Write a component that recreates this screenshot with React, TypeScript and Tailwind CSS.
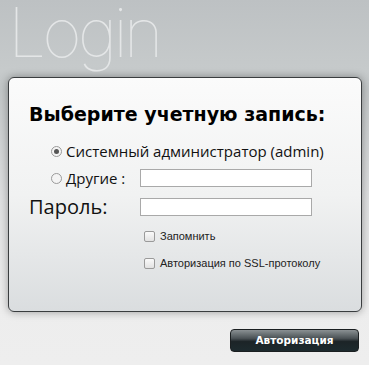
export default function App() {
  return (
    <div className="relative h-[365px] w-[369px] overflow-hidden bg-[linear-gradient(to_bottom,#bdc1c3_0px,#c6cacb_70px,#c2c6c7_90px,#dfe0e1_200px,#ededed_300px,#eeeeee_365px)] font-['Liberation_Sans',sans-serif]">
      {/* Header */}
      <div className="h-[77px] pl-[8px]">
        <h1 className="font-['Inter',sans-serif] text-[68px] font-thin leading-[64px] tracking-[-4px] text-[#e4e6e7]">
          Login
        </h1>
      </div>

      {/* Panel */}
      <div className="mx-[8px] h-[235px] w-[354px] rounded-[6px] border border-[#3a3d3f] bg-[linear-gradient(to_bottom,#fbfbfb,#f1f2f2_50%,#dadddf)] shadow-[0_0_8px_rgba(0,0,0,0.35)]">
        <h2 className="pl-[20px] pt-[24px] font-['DejaVu_Sans',sans-serif] text-[19px] font-bold leading-[24px] text-black">
          Выберите учетную запись:
        </h2>

        <div className="mt-[15px] flex items-center pl-[42px] font-['Open_Sans',sans-serif] text-[15px] leading-[20px] text-[#111]">
          <span className="mr-[4px] flex h-[11px] w-[11px] items-center justify-center rounded-full border border-[#9a9a9a] bg-[#f4f4f4]">
            <span className="h-[5px] w-[5px] rounded-full bg-[#555]" />
          </span>
          Системный администратор (admin)
        </div>

        <div className="mt-[7px] flex items-center font-['Open_Sans',sans-serif] text-[15px] leading-[20px] text-[#111]">
          <div className="flex w-[131px] items-center pl-[42px]">
            <span className="mr-[4px] h-[11px] w-[11px] rounded-full border border-[#9a9a9a] bg-[#f4f4f4]" />
            Другие :
          </div>
          <div className="h-[18px] w-[172px] border border-[#a9a9a9] bg-white" />
        </div>

        <div className="mt-[7px] flex items-center text-[#111]">
          <div className="w-[131px] pl-[20px] font-['Open_Sans',sans-serif] text-[20px] leading-[24px]">
            Пароль:
          </div>
          <div className="h-[18px] w-[172px] border border-[#a9a9a9] bg-white" />
        </div>

        <div className="mt-[11px] flex flex-col gap-[15px] pl-[135px] font-['Liberation_Sans',sans-serif] text-[11px] leading-[12px] text-[#222]">
          <div className="flex items-center">
            <span className="mr-[5px] h-[11px] w-[11px] rounded-[2px] border border-[#9a9a9a] bg-[linear-gradient(to_bottom,#fafafa,#e2e2e2)]" />
            Запомнить
          </div>
          <div className="flex items-center">
            <span className="mr-[5px] h-[11px] w-[11px] rounded-[2px] border border-[#9a9a9a] bg-[linear-gradient(to_bottom,#fafafa,#e2e2e2)]" />
            Авторизация по SSL-протоколу
          </div>
        </div>
      </div>

      {/* Button */}
      <div className="mt-[17px] flex justify-end pr-[10px]">
        <button className="h-[23px] w-[129px] rounded-[4px] border border-[#1b1f21] bg-[linear-gradient(to_bottom,#8a9093_0%,#4a5155_40%,#1c2427_55%,#1d2a2e_100%)] font-['DejaVu_Sans',sans-serif] text-[10.5px] font-bold leading-[21px] text-white">
          Авторизация
        </button>
      </div>
    </div>
  );
}
